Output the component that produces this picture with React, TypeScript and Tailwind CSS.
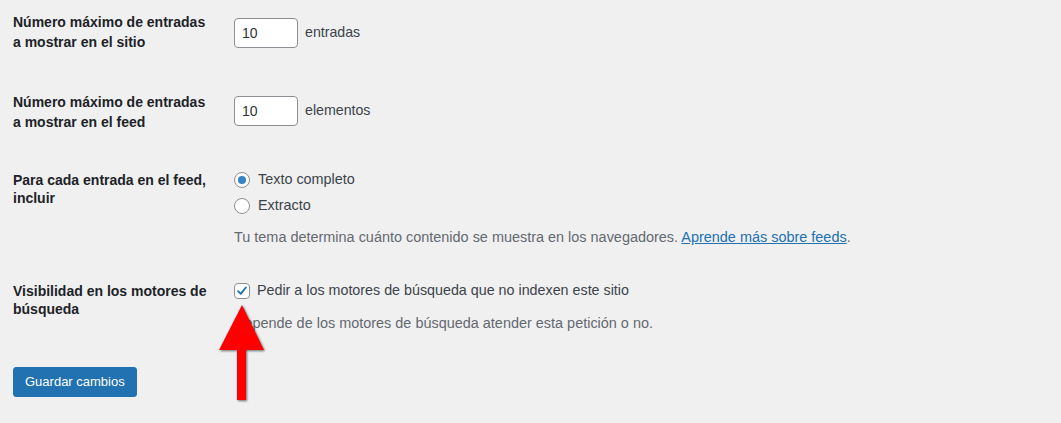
const labelCls = "w-[221px] shrink-0 text-[14px] font-bold text-[#1d2327]";

const Radio = ({ checked, label }: { checked?: boolean; label: string }) => (
  <label className="flex items-center h-[26px]">
    <span className="w-4 h-4 rounded-full border border-[#8c8f94] bg-white flex items-center justify-center">
      {checked && <span className="w-2 h-2 rounded-full bg-[#3582c4]" />}
    </span>
    <span className="ml-[8px] text-[14.4px] text-[#3c434a]">{label}</span>
  </label>
);

const App = () => {
  return (
    <div className="relative w-[1061px] h-[423px] overflow-hidden bg-[#f0f0f1] pl-[13px] font-['Liberation_Sans',Arial,sans-serif]">
      {/* Entradas en el sitio */}
      <div className="flex h-[80px]">
        <div className={`${labelCls} pt-[12px] leading-[20px]`}>
          Número máximo de entradas
          <br />
          a mostrar en el sitio
        </div>
        <div className="flex items-center pt-[18px] h-[48px]">
          <div className="w-[64px] h-[30px] border border-[#8c8f94] rounded-[4px] bg-white pl-[7px] flex items-center text-[14px] text-[#2c3338]">
            10
          </div>
          <span className="ml-[7px] text-[14.2px] text-[#3c434a]">entradas</span>
        </div>
      </div>

      {/* Entradas en el feed */}
      <div className="flex h-[80px]">
        <div className={`${labelCls} pt-[12px] leading-[20px]`}>
          Número máximo de entradas
          <br />
          a mostrar en el feed
        </div>
        <div className="flex items-center pt-[16px] h-[46px]">
          <div className="w-[64px] h-[30px] border border-[#8c8f94] rounded-[4px] bg-white pl-[7px] flex items-center text-[14px] text-[#2c3338]">
            10
          </div>
          <span className="ml-[7px] text-[14.2px] text-[#3c434a]">elementos</span>
        </div>
      </div>

      {/* Contenido del feed */}
      <div className="flex h-[113px]">
        <div className={`${labelCls} pt-[11px] leading-[18px]`}>
          Para cada entrada en el feed,
          <br />
          incluir
        </div>
        <div className="pt-[7px]">
          <Radio checked label="Texto completo" />
          <Radio label="Extracto" />
          <p className="mt-[8px] text-[14.45px] text-[#646970] leading-[20px]">
            Tu tema determina cuánto contenido se muestra en los navegadores.{" "}
            <a href="#" className="text-[#2271b1] underline">
              Aprende más sobre feeds
            </a>
            .
          </p>
        </div>
      </div>

      {/* Visibilidad */}
      <div className="flex h-[94px]">
        <div className={`${labelCls} pt-[9px] leading-[18px]`}>
          Visibilidad en los motores de
          <br />
          búsqueda
        </div>
        <div className="pt-[10px]">
          <label className="flex items-center h-[16px]">
            <span className="w-4 h-4 rounded-[4px] border border-[#8c8f94] bg-white flex items-center justify-center">
              <svg viewBox="0 0 16 16" className="w-[14px] h-[14px]">
                <path d="M3.5 8.2 L6.6 11.2 L12.4 4" fill="none" stroke="#2271b1" strokeWidth="2.2" strokeLinecap="round" strokeLinejoin="round" />
              </svg>
            </span>
            <span className="ml-[7px] text-[14.3px] text-[#3c434a]">
              Pedir a los motores de búsqueda que no indexen este sitio
            </span>
          </label>
          <p className="mt-[14px] text-[14.45px] text-[#646970] leading-[20px]">
            Depende de los motores de búsqueda atender esta petición o no.
          </p>
        </div>
      </div>

      <button className="h-[30px] px-[11px] rounded-[3px] bg-[#2271b1] text-white text-[13px] leading-[28px] border border-[#2271b1]">
        Guardar cambios
      </button>

      {/* Flecha roja */}
      <svg
        className="absolute left-[214px] top-[300px] drop-shadow-[1px_1px_1px_rgba(0,0,0,0.55)]"
        width="56"
        height="106"
        viewBox="0 0 56 106"
      >
        <polygon points="28,5 5,50 23,50 23,100 32,100 32,50 50,50" fill="#ff0000" />
      </svg>
    </div>
  );
};

export default App;
